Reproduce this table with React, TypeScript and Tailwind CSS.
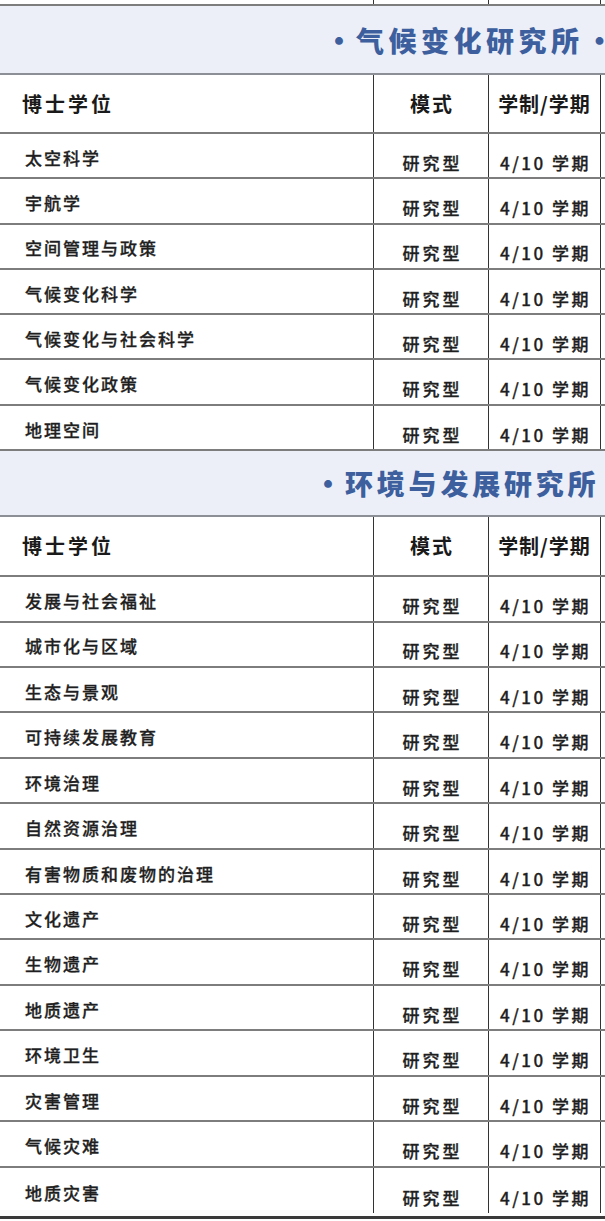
import React from "react";

type Row = { name: string };

const climate = [
  "太空科学",
  "宇航学",
  "空间管理与政策",
  "气候变化科学",
  "气候变化与社会科学",
  "气候变化政策",
  "地理空间",
];

const environment = [
  "发展与社会福祉",
  "城市化与区域",
  "生态与景观",
  "可持续发展教育",
  "环境治理",
  "自然资源治理",
  "有害物质和废物的治理",
  "文化遗产",
  "生物遗产",
  "地质遗产",
  "环境卫生",
  "灾害管理",
  "气候灾难",
  "地质灾害",
];

const font = { fontFamily: '"Noto Sans CJK SC", "Noto Sans", sans-serif' };

function Band({
  title,
  height,
  pad,
  tracking,
}: {
  title: string;
  height: string;
  pad: string;
  tracking: string;
}) {
  return (
    <div
      className={`flex items-center overflow-hidden whitespace-nowrap bg-[#eceff8] border-b-2 border-[#8c8f96] ${height}`}
    >
      <div
        className={`flex items-center text-[28px] font-black text-[#3d5f9e] leading-none ${pad}`}
      >
        <span>·</span>
        <span className={`ml-[3px] ${tracking}`}>{title}</span>
        <span className="ml-[2px]">·</span>
      </div>
    </div>
  );
}

function HeaderRow({ height }: { height: string }) {
  return (
    <div className={`flex border-b-2 border-[#7d7d7d] text-[#1a1a1a] font-bold ${height}`}>
      <div className="w-[374px] shrink-0 flex items-center pl-[22px] border-r border-[#333] text-[20px] tracking-[3px]">
        博士学位
      </div>
      <div className="w-[115px] shrink-0 flex items-center justify-center border-r border-[#333] text-[20px] tracking-[2px] pl-[2px]">
        模式
      </div>
      <div className="w-[112px] shrink-0 flex items-center justify-center border-r border-[#333] text-[20px] tracking-[1px]">
        学制/学期
      </div>
      <div className="flex-1" />
    </div>
  );
}

function DataRow({ row, height, last }: { row: Row; height: string; last?: boolean }) {
  return (
    <div
      className={`flex text-[#1f1f1f] ${height} ${last ? "" : "border-b-2 border-[#7d7d7d]"}`}
    >
      <div className="w-[374px] shrink-0 flex items-center pl-[25px] pt-[4px] border-r border-[#333] text-[17px] font-medium tracking-[2px] [-webkit-text-stroke:0.3px_#1f1f1f]">
        {row.name}
      </div>
      <div className="w-[115px] shrink-0 flex items-center justify-center pt-[14px] border-r border-[#333] text-[17px] font-medium tracking-[3px] pl-[3px] [-webkit-text-stroke:0.3px_#1f1f1f]">
        研究型
      </div>
      <div className="w-[112px] shrink-0 flex items-center justify-center pt-[14px] border-r border-[#333] text-[17px] font-medium tracking-[2.5px] pl-[2px] [-webkit-text-stroke:0.3px_#1f1f1f]">
        4/10 学期
      </div>
      <div className="flex-1" />
    </div>
  );
}

export default function App() {
  return (
    <div className="w-[605px] h-[1221px] bg-white overflow-hidden" style={font}>
      {/* tail of the table above */}
      <div className="flex h-[6px] border-b-2 border-[#7d7d7d]">
        <div className="w-[374px] shrink-0 border-r border-[#333]" />
        <div className="w-[115px] shrink-0 border-r border-[#333]" />
        <div className="w-[112px] shrink-0 border-r border-[#333]" />
      </div>

      <Band
        title="气候变化研究所"
        height="h-[69px]"
        pad="pl-[325px]"
        tracking="tracking-[4.5px]"
      />
      <HeaderRow height="h-[59px]" />
      {climate.map((name) => (
        <DataRow key={name} row={{ name }} height="h-[45.3px]" />
      ))}

      <Band
        title="环境与发展研究所"
        height="h-[66px]"
        pad="pl-[314px]"
        tracking="tracking-[3.8px]"
      />
      <HeaderRow height="h-[60px]" />
      {environment.map((name, i) => (
        <DataRow
          key={name}
          row={{ name }}
          height="h-[45.43px]"
          last={i === environment.length - 1}
        />
      ))}

      <div className="h-[3px]" />
      <div className="h-[3px] bg-[#3a3a3a]" />
    </div>
  );
}
